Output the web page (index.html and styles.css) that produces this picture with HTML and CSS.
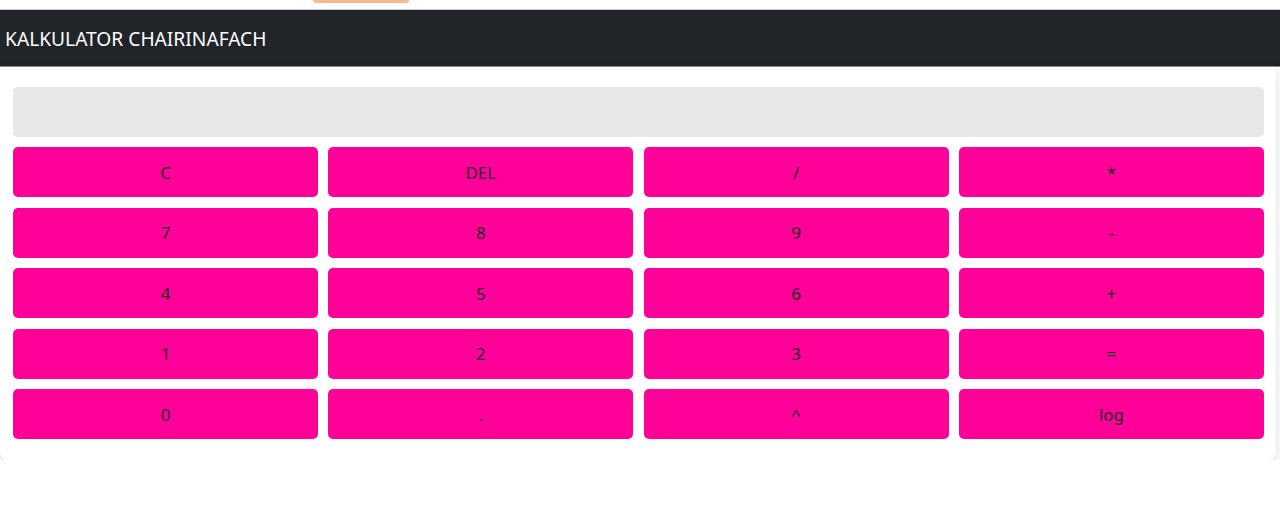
FILE: index.html
```html
<!DOCTYPE html>
<html lang="id">
<head>
<meta charset="utf-8">
<title>Kalkulator Chairinafach</title>
<link rel="stylesheet" href="styles.css">
</head>
<body>
<div class="topstrip"><div class="blob"></div></div>
<nav class="navbar"><span class="brand">KALKULATOR CHAIRINAFACH</span></nav>
<main class="card">
  <div class="display"></div>
  <div class="keys">
    <button class="key">C</button>
    <button class="key">DEL</button>
    <button class="key">/</button>
    <button class="key">*</button>
    <button class="key">7</button>
    <button class="key">8</button>
    <button class="key">9</button>
    <button class="key">-</button>
    <button class="key">4</button>
    <button class="key">5</button>
    <button class="key">6</button>
    <button class="key">+</button>
    <button class="key">1</button>
    <button class="key">2</button>
    <button class="key">3</button>
    <button class="key">=</button>
    <button class="key">0</button>
    <button class="key">.</button>
    <button class="key">^</button>
    <button class="key">log</button>
  </div>
</main>
</body>
</html>
```
FILE: styles.css
```css
* { box-sizing: border-box; }
html, body { margin: 0; padding: 0; background: #fff; }
body { font-family: "Noto Sans", "Open Sans", sans-serif; color: #212529; }

.topstrip {
  height: 10px;
  display: flex;
  border-bottom: 1px solid #c8c8c8;
}
.blob {
  margin-left: 313px;
  width: 96px;
  height: 3px;
  background: #fdb58c;
  border-radius: 0 0 12px 12px;
}

.navbar {
  height: 57px;
  background: #212529;
  border-bottom: 1px solid #8a8d90;
  display: flex;
  align-items: center;
  padding-left: 5px;
}
.brand {
  color: #fff;
  font-size: 19.2px;
}

.card {
  margin-right: 4px;
  padding: 20px 12px 21px 13px;
  background: #fff;
  border-radius: 0 0 8px 8px;
  box-shadow: 0 4px 12px rgba(0, 0, 0, 0.14);
  display: flex;
  flex-direction: column;
  gap: 10.5px;
}
.display {
  height: 49.5px;
  background: #e8e8e8;
  border-radius: 5px;
}
.keys {
  display: grid;
  grid-template-columns: repeat(4, 1fr);
  gap: 10.5px 10.3px;
}
.key {
  height: 50px;
  border: none;
  border-radius: 5px;
  background: #ff0099;
  color: #212529;
  font-family: inherit;
  font-size: 17px;
  padding: 0;
}
```
